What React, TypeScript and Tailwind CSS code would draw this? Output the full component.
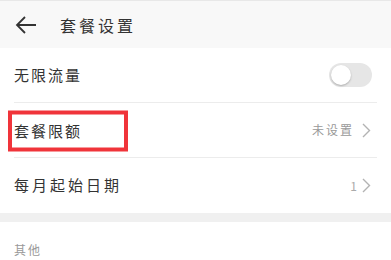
import React from 'react';

const font = { fontFamily: '"Noto Sans CJK SC", "Noto Sans", sans-serif' };

function Chevron() {
  return (
    <svg width="9" height="15" viewBox="0 0 9 15" fill="none" className="shrink-0">
      <path d="M1 1l6.5 6.5L1 14" stroke="#b3b3b3" strokeWidth="1.4" />
    </svg>
  );
}

function Row({ children, divider = true }: { children: React.ReactNode; divider?: boolean }) {
  return (
    <div className="px-[14px] bg-white">
      <div
        className={`h-[55px] flex items-center justify-between pr-[6px] ${
          divider ? 'border-b border-[#ececec]' : ''
        }`}
      >
        {children}
      </div>
    </div>
  );
}

export default function App() {
  return (
    <div className="w-[391px] h-[260px] bg-white overflow-hidden text-[#333]" style={font}>
      {/* header */}
      <div className="h-[48px] bg-[#f8f8f8] border-t border-[#e8e8e8] flex items-center">
        <svg width="22" height="20" viewBox="0 0 22 20" fill="none" className="ml-[15px]">
          <path d="M21 10H2M10 2L2 10l8 8" stroke="#333" strokeWidth="1.8" />
        </svg>
        <span className="ml-[23px] text-[16px] tracking-[3px]">套餐设置</span>
      </div>

      <Row>
        <span className="text-[15px] tracking-[2px]">无限流量</span>
        <div className="w-[43px] h-[24px] rounded-full bg-[#e6e6e6] p-[2px] -mr-[1px]">
          <div className="w-[20px] h-[20px] rounded-full bg-white shadow-[0_1px_2px_rgba(0,0,0,0.25)]" />
        </div>
      </Row>

      <Row>
        <div className="relative">
          <span className="text-[15px] tracking-[2px]">套餐限额</span>
          {/* highlight box */}
          <div className="absolute left-[-6px] top-1/2 -translate-y-1/2 mt-[1px] w-[120px] h-[41px] border-[4px] border-[#f0343a]" />
        </div>
        <div className="flex items-center gap-[8px]">
          <span className="text-[12px] text-[#999] tracking-[2px]">未设置</span>
          <Chevron />
        </div>
      </Row>

      <Row divider={false}>
        <span className="text-[15px] tracking-[3px]">每月起始日期</span>
        <div className="flex items-center gap-[5px]">
          <span className="text-[12px] text-[#aaa]">1</span>
          <Chevron />
        </div>
      </Row>

      <div className="h-[9px] bg-[#f0f0f0]" />

      <div className="px-[14px] pt-[17px] leading-[18px]">
        <span className="text-[12px] text-[#999] tracking-[2px]">其他</span>
      </div>
    </div>
  );
}
